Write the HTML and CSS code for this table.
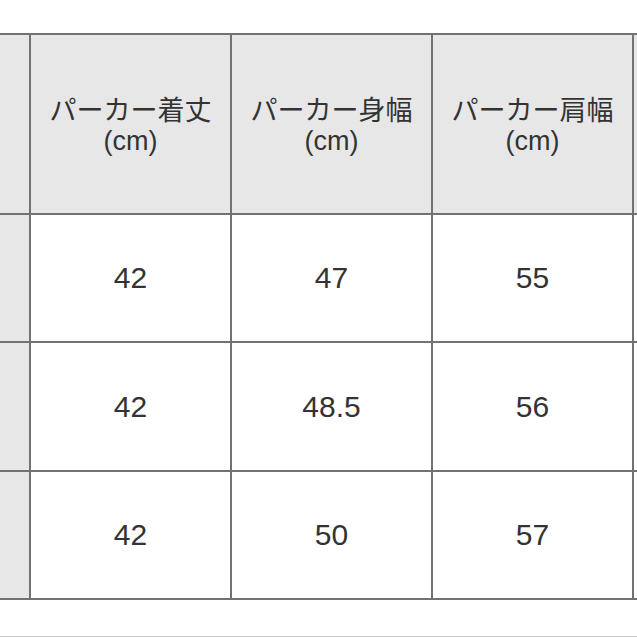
FILE: index.html
```html
<!DOCTYPE html>
<html lang="ja">
<head>
<meta charset="utf-8">
<title>サイズ表</title>
<link rel="stylesheet" href="styles.css">
</head>
<body>
<div class="page">
  <div class="table">
    <div class="cell side"></div>
    <div class="cell head">パーカー着丈<br>(cm)</div>
    <div class="cell head">パーカー身幅<br>(cm)</div>
    <div class="cell head">パーカー肩幅<br>(cm)</div>
    <div class="cell head edge"></div>

    <div class="cell side"></div>
    <div class="cell num">42</div>
    <div class="cell num">47</div>
    <div class="cell num">55</div>
    <div class="cell edge"></div>

    <div class="cell side"></div>
    <div class="cell num">42</div>
    <div class="cell num">48.5</div>
    <div class="cell num">56</div>
    <div class="cell edge"></div>

    <div class="cell side"></div>
    <div class="cell num">42</div>
    <div class="cell num">50</div>
    <div class="cell num">57</div>
    <div class="cell edge"></div>
  </div>
  <div class="rule"></div>
</div>
</body>
</html>
```

FILE: styles.css
```css
html, body {
  margin: 0;
  padding: 0;
  background: #ffffff;
  overflow: hidden;
}

.page {
  width: 637px;
  height: 637px;
  display: flex;
  flex-direction: column;
  padding-top: 33px;
  box-sizing: border-box;
  font-family: "Liberation Sans", "Noto Sans CJK JP", sans-serif;
  color: #333333;
}

.table {
  display: grid;
  grid-template-columns: 29px 199px 199px 199px 1fr;
  grid-template-rows: 178px 126px 127px 126px;
  gap: 2px;
  padding: 2px 0;
  background: #727272;
}

.cell {
  background: #ffffff;
  display: flex;
  align-items: center;
  justify-content: center;
  text-align: center;
}

.side,
.head {
  background: #e7e7e7;
}

.head {
  font-size: 27px;
  line-height: 30px;
  padding-top: 3px;
}

.num {
  font-size: 30px;
}

.rule {
  margin-top: auto;
  height: 1px;
  background: #c9c9c9;
}
```
